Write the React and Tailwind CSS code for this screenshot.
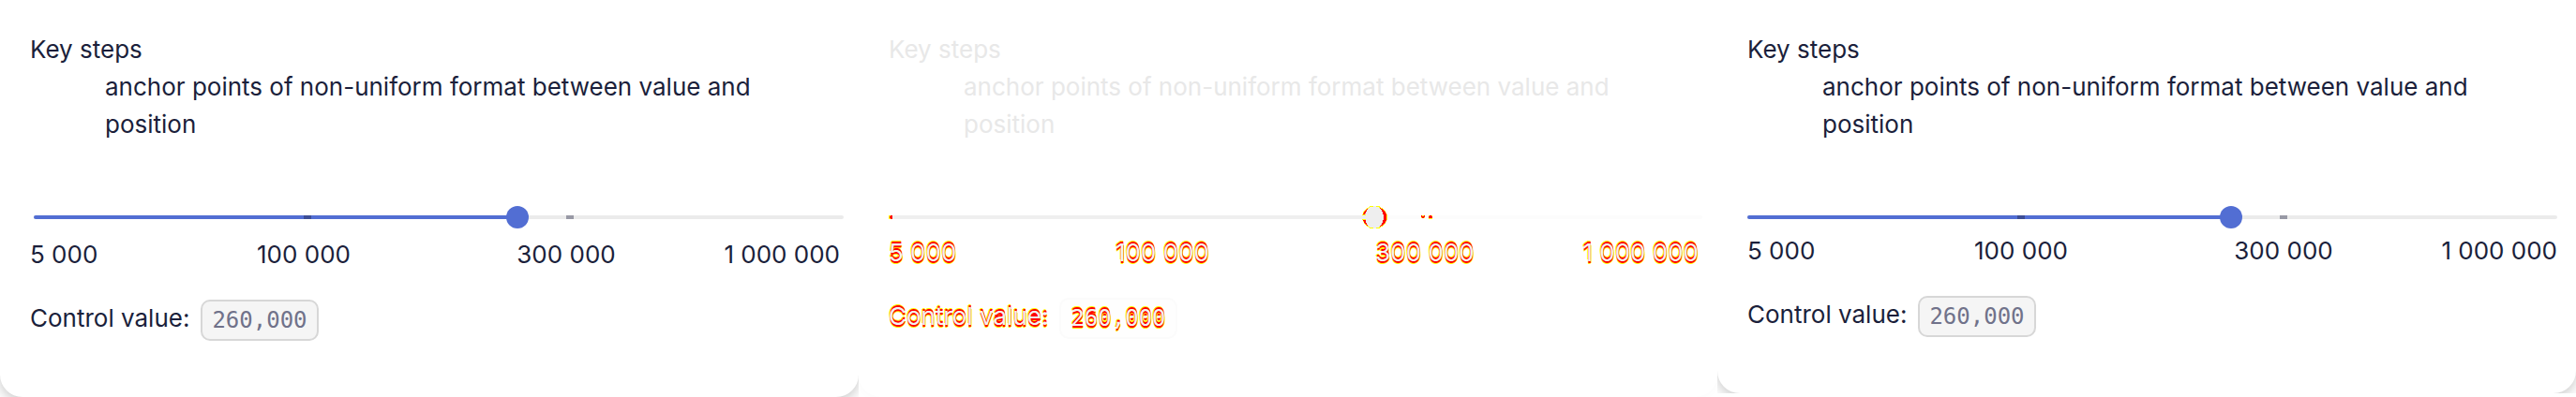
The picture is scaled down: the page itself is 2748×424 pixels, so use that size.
const ticks = ["5 000", "100 000", "300 000", "1 000 000"];

const themes = {
  normal: {
    card: "bg-white shadow-[0_4px_14px_rgba(0,0,0,0.22)]",
    heading: "text-[#1b1f3b]",
    text: "text-[#1b1f3b]",
    rail: "bg-[#ebebeb]",
    fill: "bg-[#526ed3]",
    badge: "border-[#d7d7d7] bg-[#f5f5f5] text-[#70728a]",
    thumb: "[&::-webkit-slider-thumb]:bg-[#526ed3]",
  },
  diff: {
    card: "bg-white shadow-[0_2px_10px_rgba(0,0,0,0.02)]",
    heading: "text-[#e8e8e8]",
    text: "text-[#f2f2f2] [text-shadow:0_-2px_#ff0000,0_2px_#ff0000,0_-3px_#ffff00,0_3px_#ffff00,-1px_-2px_#ffff00,1px_2px_#ffff00]",
    rail: "bg-[#fcfcfc]",
    fill: "bg-[#efefef]",
    badge: "border-[#fbfbfb] bg-[#fefefe]",
    thumb: "[&::-webkit-slider-thumb]:bg-transparent",
  },
};

function DiffMarks() {
  return (
    <div className="pointer-events-none absolute inset-y-0 left-0 right-1">
      <svg className="absolute left-0 top-[10px] h-1 w-1" viewBox="0 0 4 4" shapeRendering="crispEdges" aria-hidden="true">
        <path d="M0 0h4v4H0z" fill="#ffff00" />
        <path d="M1 1h1V0h2v4H2V3H1z" fill="#ff0000" />
      </svg>
      <svg
        className="absolute left-[60%] top-0 h-6 w-7 -translate-x-[13px]"
        viewBox="0 0 28 24"
        aria-hidden="true"
        shapeRendering="crispEdges"
      >
        <ellipse cx="13.5" cy="12" rx="13.5" ry="12" fill="#ffff00" />
        <ellipse cx="13.5" cy="12" rx="13" ry="11" fill="#ff0000" />
        <ellipse cx="13" cy="12" rx="10" ry="12" fill="#eeeeee" />
        <path d="M0 10h4v4H0z" fill="#eeeeee" />
        <path d="M0 9h4v1H0zM0 14h4v1H0zM8 0h4v1H8zM15 0h4v1h-4zM8 23h4v1H8zM15 23h4v1h-4z" fill="#ffff00" />
      </svg>
      <svg className="absolute left-2/3 top-[10px] h-1 w-3 -translate-x-2" viewBox="0 0 12 4" shapeRendering="crispEdges" aria-hidden="true">
        <path d="M0 0h4v3H0zM8 0h4v4H8z" fill="#ffff00" />
        <path d="M0 0h1v1h2V0h1v2H3v1H1V2H0zM8 1h1V0h2v1h1v2H8z" fill="#ff0000" />
      </svg>
    </div>
  );
}

function Slider({ theme, diff, name }) {
  return (
    <div className="relative flex h-6 items-center">
      <div className={`h-1 w-full overflow-hidden rounded-full ${theme.rail}`}>
        <div className={`h-full w-3/5 ${theme.fill}`} />
      </div>
      {!diff && (
        <div className="absolute inset-x-3 top-[10px] h-1">
          <span className="absolute left-1/3 h-1 w-2 -translate-x-1 bg-[#1b1f3b]/40" />
          <span className="absolute left-2/3 h-1 w-2 -translate-x-1 bg-[#1b1f3b]/40" />
        </div>
      )}
      <input
        type="range"
        min="0"
        max="100"
        defaultValue="60"
        aria-label={name}
        className={`absolute inset-0 m-0 h-6 w-full cursor-pointer appearance-none bg-transparent [&::-webkit-slider-thumb]:h-6 [&::-webkit-slider-thumb]:w-6 [&::-webkit-slider-thumb]:appearance-none [&::-webkit-slider-thumb]:rounded-full ${theme.thumb}`}
      />
      {diff && <DiffMarks />}
    </div>
  );
}

function Panel({ variant = "normal", name, sliderClass = "", labelsClass = "mt-1", className = "" }) {
  const theme = themes[variant];
  return (
    <section className={`grid overflow-hidden ${className}`}>
      <div className={`rounded-b-3xl pb-[60px] pl-8 pr-5 pt-[33px] ${theme.card}`}>
        <dl className={theme.heading}>
          <dt>Key steps</dt>
          <dd className="ml-20">anchor points of non-uniform format between value and position</dd>
        </dl>
        <div className={`mt-[67px] ${sliderClass}`}>
          <Slider theme={theme} diff={variant === "diff"} name={name} />
        </div>
        <div className={`grid grid-cols-[1fr_2fr_2fr_1fr] whitespace-nowrap px-3 text-center ${labelsClass} ${theme.text}`}>
          {ticks.map((tick) => (
            <span key={tick} className="first:-ml-3 first:text-left last:-mr-3 last:text-right">
              {tick}
            </span>
          ))}
        </div>
        <p className={`mt-7 flex items-start gap-3 ${theme.text}`}>
          <span>Control value:</span>
          <code className={`rounded-[10px] border-2 px-2.5 font-['DejaVu_Sans_Mono',monospace] text-2xl leading-10 ${theme.badge}`}>
            260,000
          </code>
        </p>
      </div>
    </section>
  );
}

export default function App() {
  return (
    <main className="grid grid-cols-3 bg-white font-[Inter,sans-serif] text-[26px] leading-10">
      <Panel name="Value before" sliderClass="-mr-1 ml-1" labelsClass="mt-2" />
      <Panel name="Value difference" variant="diff" sliderClass="-mr-1" labelsClass="mt-1.5" />
      <Panel name="Value after" className="self-start" />
    </main>
  );
}
